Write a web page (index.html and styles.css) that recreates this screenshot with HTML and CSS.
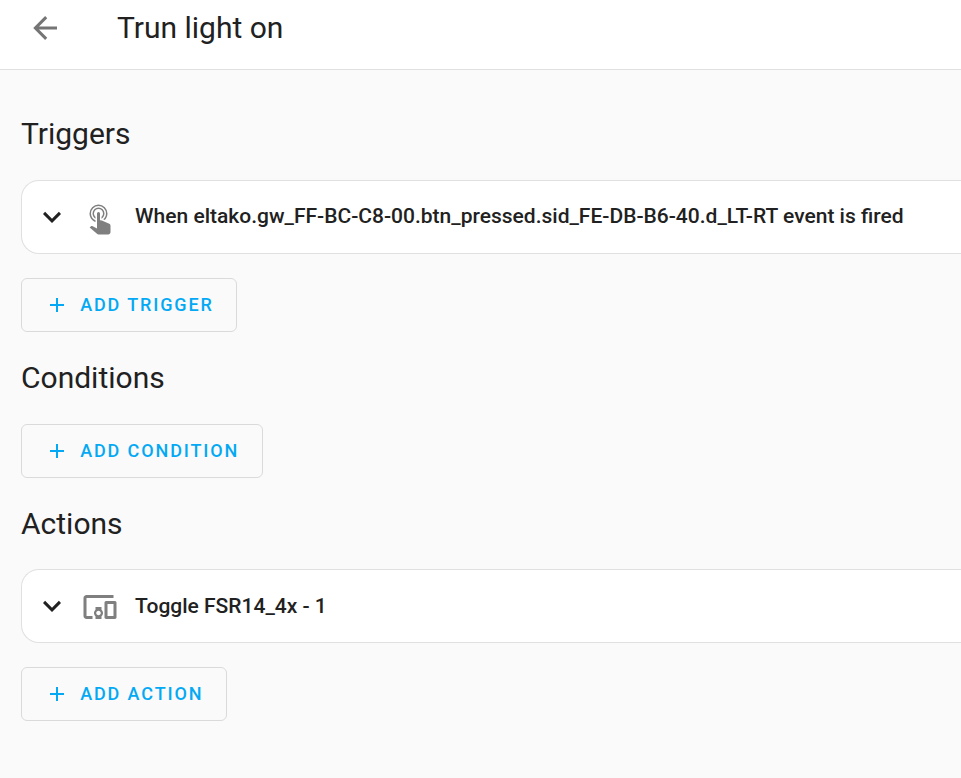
FILE: index.html
```html
<!DOCTYPE html>
<html lang="en">
<head>
<meta charset="utf-8">
<title>Trun light on</title>
<link rel="stylesheet" href="styles.css">
</head>
<body>
<header class="toolbar">
  <svg class="icon back" viewBox="0 0 24 24"><path d="M20,11V13H8L13.5,18.5L12.08,19.92L4.16,12L12.08,4.08L13.5,5.5L8,11H20Z"/></svg>
  <h1 class="title">Trun light on</h1>
</header>
<main class="content">
  <section class="section triggers">
    <h2 class="heading">Triggers</h2>
    <div class="card">
      <svg class="icon chevron" viewBox="0 0 24 24"><path d="M7.41,8.58L12,13.17L16.59,8.58L18,10L12,16L6,10L7.41,8.58Z"/></svg>
      <svg class="icon kind" viewBox="0 0 24 24"><path d="M10,9A1,1 0 0,1 11,8A1,1 0 0,1 12,9V13.47L13.21,13.6L18.15,15.79C18.68,16.03 19,16.56 19,17.14V21.5C18.97,22.32 18.32,22.97 17.5,23H11C10.62,23 10.26,22.85 10,22.57L5.1,18.37L5.84,17.6C6.03,17.39 6.3,17.28 6.58,17.28H6.8L10,19V9M11,5A4,4 0 0,1 15,9C15,10.5 14.2,11.77 13,12.46V11.24C13.61,10.69 14,9.89 14,9A3,3 0 0,0 11,6A3,3 0 0,0 8,9C8,9.89 8.39,10.69 9,11.24V12.46C7.8,11.77 7,10.5 7,9A4,4 0 0,1 11,5M11,3A6,6 0 0,1 17,9C17,10.7 16.29,12.23 15.16,13.33L14.16,12.88C15.28,11.96 16,10.56 16,9A5,5 0 0,0 11,4A5,5 0 0,0 6,9C6,11.05 7.23,12.81 9,13.58V14.66C6.67,13.83 5,11.61 5,9A6,6 0 0,1 11,3Z"/></svg>
      <h3 class="label">When eltako.gw_FF-BC-C8-00.btn_pressed.sid_FE-DB-B6-40.d_LT-RT event is fired</h3>
    </div>
    <button class="add"><svg class="plus" viewBox="0 0 24 24"><path d="M19,13H13V19H11V13H5V11H11V5H13V11H19V13Z"/></svg>Add trigger</button>
  </section>
  <section class="section conditions">
    <h2 class="heading">Conditions</h2>
    <button class="add"><svg class="plus" viewBox="0 0 24 24"><path d="M19,13H13V19H11V13H5V11H11V5H13V11H19V13Z"/></svg>Add condition</button>
  </section>
  <section class="section actions">
    <h2 class="heading">Actions</h2>
    <div class="card">
      <svg class="icon chevron" viewBox="0 0 24 24"><path d="M7.41,8.58L12,13.17L16.59,8.58L18,10L12,16L6,10L7.41,8.58Z"/></svg>
      <svg class="icon kind" viewBox="0 0 24 24"><path d="M3 6H21V4H3C1.9 4 1 4.9 1 6V18C1 19.1 1.9 20 3 20H7V18H3V6M13 12H9V13.78C8.39 14.33 8 15.11 8 16C8 16.89 8.39 17.67 9 18.22V20H13V18.22C13.61 17.67 14 16.88 14 16S13.61 14.33 13 13.78V12M11 17.5C10.17 17.5 9.5 16.83 9.5 16S10.17 14.5 11 14.5 12.5 15.17 12.5 16 11.83 17.5 11 17.5M22 8H16C15.5 8 15 8.5 15 9V19C15 19.5 15.5 20 16 20H22C22.5 20 23 19.5 23 19V9C23 8.5 22.5 8 22 8M21 18H17V10H21V18Z"/></svg>
      <h3 class="label">Toggle FSR14_4x - 1</h3>
    </div>
    <button class="add"><svg class="plus" viewBox="0 0 24 24"><path d="M19,13H13V19H11V13H5V11H11V5H13V11H19V13Z"/></svg>Add action</button>
  </section>
</main>
</body>
</html>
```
FILE: styles.css
```css
* { box-sizing: border-box; }
body {
  margin: 0;
  min-height: 100vh;
  overflow-x: hidden;
  background: #fafafa;
  color: #212121;
  font-family: Roboto, sans-serif;
}
svg { display: block; flex: none; fill: currentColor; }
.icon { width: 36px; height: 36px; }
.toolbar {
  display: flex;
  align-items: center;
  height: 70px;
  padding: 0 27px 14px;
  background: #fff;
  border-bottom: 1px solid #e0e0e0;
}
.back { color: #757575; }
.title { margin: 0 0 0 54px; font-size: 30px; font-weight: 400; line-height: 40px; }
.content { padding: 41px 0 0 21px; }
.heading { margin: 0; font-size: 30px; font-weight: 400; line-height: 45px; }
.card {
  display: flex;
  align-items: center;
  height: 74px;
  margin: 24px 0;
  padding-left: 12px;
  background: #fff;
  border: 1px solid #e0e0e0;
  border-right: 0;
  border-radius: 18px 0 0 18px;
}
.chevron { color: #212121; }
.kind { margin: 2px 0 0 12px; color: #7f7f7f; }
.label { margin: 0 0 2px 17.1px; font-size: 21px; font-weight: 500; line-height: 32px; white-space: nowrap; }
.add {
  display: flex;
  align-items: center;
  height: 54px;
  padding: 0 22.4px 2px 23px;
  color: #03a9f4;
  background: transparent;
  border: 1px solid #dadada;
  border-radius: 6px;
  font: 500 18px/27px Roboto, sans-serif;
  letter-spacing: 1.875px;
  text-transform: uppercase;
}
.plus { width: 24px; height: 24px; margin: 2px 11.2px 0 0; }
.conditions, .actions { padding-top: 23px; }
.conditions .add { margin-top: 24px; }
.actions .card { margin-top: 23px; }
.actions .label { margin-bottom: 0; }
```
